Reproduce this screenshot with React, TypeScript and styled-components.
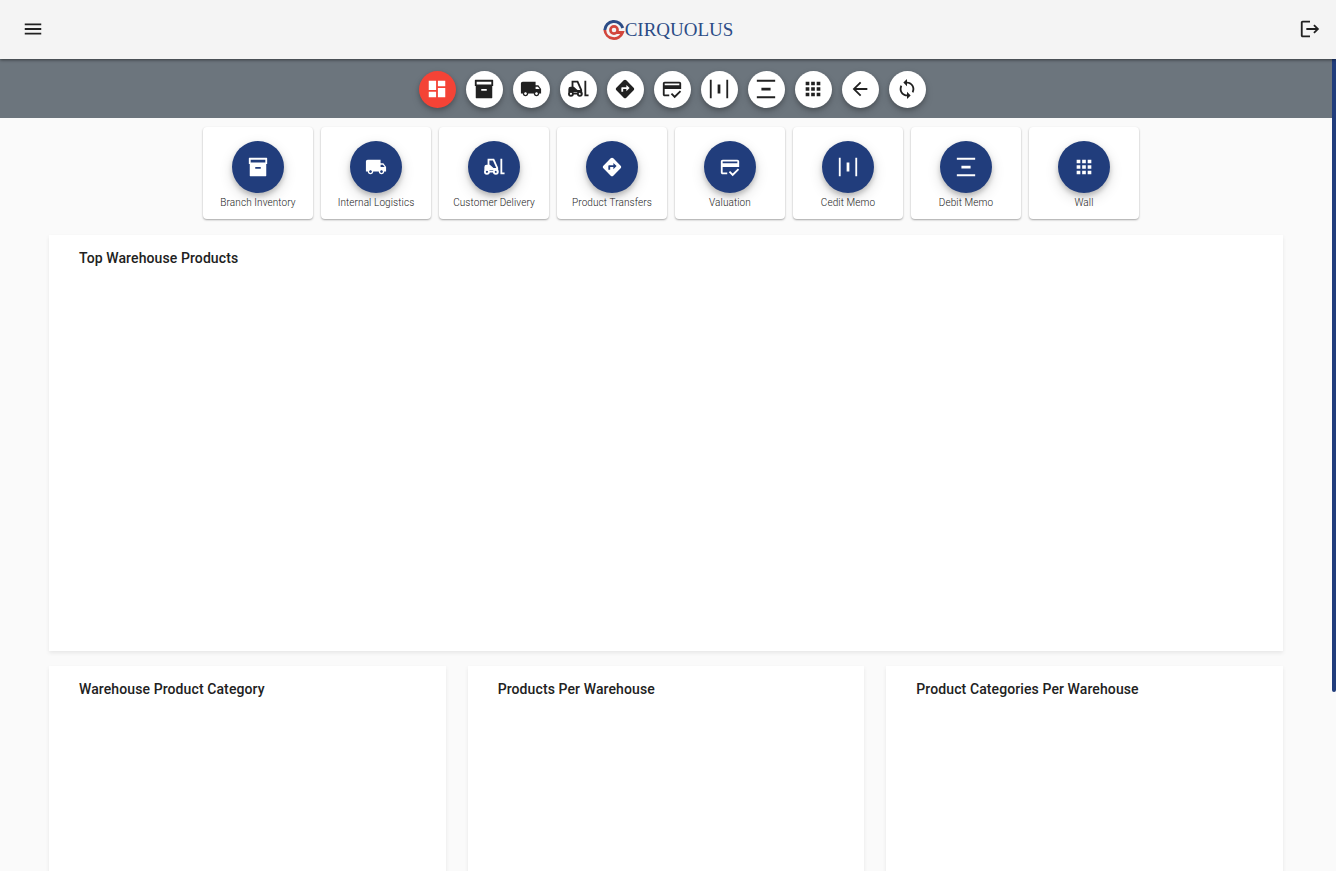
import React, { useLayoutEffect, useRef, useState } from "react";
import styled, { createGlobalStyle, css } from "styled-components";
import {
  MdApps,
  MdArrowBack,
  MdCreditScore,
  MdDashboard,
  MdDirections,
  MdHorizontalDistribute,
  MdLocalShipping,
  MdLogout,
  MdMenu,
  MdSync,
  MdVerticalDistribute,
} from "react-icons/md";

const navy = "#213d7c";

const GlobalStyle = createGlobalStyle`
  *, *::before, *::after { box-sizing: border-box; }
  body {
    margin: 0;
    background: #fafafa;
    color: #212121;
    font-family: Roboto, "Liberation Sans", sans-serif;
  }
`;

const Shell = styled.div`
  display: flex;
  flex-direction: column;
  height: 100vh;
`;

const Header = styled.header`
  position: relative;
  z-index: 1;
  display: grid;
  grid-template-columns: 1fr auto 1fr;
  flex: none;
  align-items: center;
  height: 59px;
  padding: 0 15px 1px;
  background: #f4f4f4;
  box-shadow: 0 1px 3px rgba(0, 0, 0, 0.5);
`;

const IconButton = styled.button<{ $end?: boolean }>`
  display: flex;
  justify-self: ${(p) => (p.$end ? "end" : "start")};
  padding: ${(p) => (p.$end ? "0" : "0 7px")};
  border: 0;
  background: none;
  color: #212121;
  font-size: 22px;
  cursor: pointer;
`;

const Brand = styled.a`
  display: flex;
  align-items: center;
  padding-top: 2px;
  color: #2c4c86;
  font-family: "Liberation Serif", serif;
  font-size: 19px;
  line-height: 24px;
  text-decoration: none;
`;

const Body = styled.div`
  display: flex;
  flex: 1;
  min-height: 0;
`;

const Scroller = styled.main`
  flex: 1;
  min-width: 0;
  overflow-y: auto;
  scrollbar-width: none;
`;

const Rail = styled.div`
  flex: none;
  width: 4px;
`;

const Thumb = styled.div`
  border-radius: 0 0 2px 2px;
  background: ${navy};
`;

const Toolbar = styled.nav`
  display: flex;
  justify-content: center;
  gap: 10px;
  padding: 12px 0 10px 13px;
  background: #6c757d;
`;

const round = css`
  display: flex;
  align-items: center;
  justify-content: center;
  padding: 0;
  border: 0;
  border-radius: 50%;
  font-size: 22px;
  cursor: pointer;
`;

const ToolButton = styled.button<{ $active?: boolean }>`
  ${round}
  width: 37px;
  height: 37px;
  padding: 0 1px 1px 0;
  background: ${(p) => (p.$active ? "#f44336" : "#ffffff")};
  color: ${(p) => (p.$active ? "#ffffff" : "#212121")};
  box-shadow: 0 2px 4px rgba(0, 0, 0, 0.2), 0 4px 8px rgba(0, 0, 0, 0.14);
`;

const Shortcuts = styled.div`
  display: flex;
  justify-content: center;
  gap: 8px;
  padding: 9px 0 16px 10px;
`;

const Shortcut = styled.button`
  display: flex;
  flex-direction: column;
  align-items: center;
  width: 110px;
  padding: 14px 0 6px;
  border: 0;
  border-radius: 4px;
  background: #ffffff;
  box-shadow: 0 1px 2px rgba(0, 0, 0, 0.34);
  color: #212121;
  font-family: inherit;
  font-size: 10px;
  font-weight: 300;
  line-height: 20px;
  letter-spacing: 0.1px;
  cursor: pointer;
`;

const ShortcutIcon = styled.span`
  ${round}
  width: 52px;
  height: 52px;
  background: ${navy};
  color: #ffffff;
  box-shadow: 0 3px 5px rgba(0, 0, 0, 0.2), 0 5px 14px rgba(0, 0, 0, 0.14);
`;

const Panels = styled.div`
  display: grid;
  grid-template-columns: repeat(3, 1fr);
  gap: 15px 22px;
  padding: 0 49px 18px;
`;

const Panel = styled.section<{ $wide?: boolean }>`
  grid-column: ${(p) => (p.$wide ? "1 / -1" : "auto")};
  min-height: 416px;
  padding: 14px 30px;
  background: #ffffff;
  box-shadow: 0 2px 4px rgba(0, 0, 0, 0.08);
`;

const PanelTitle = styled.h2`
  margin: 0;
  font-size: 14px;
  font-weight: 500;
  line-height: 18px;
  letter-spacing: 0.1px;
`;

function Archive() {
  return (
    <svg viewBox="0 0 24 24" width="1em" height="1em" fill="currentColor" aria-hidden="true">
      <path
        fillRule="evenodd"
        d="M2.500 2h19a.5.5 0 0 1 .5.5V8.700h-1V21.500a.5.5 0 0 1-.5.5h-17a.5.5 0 0 1-.5-.5V8.700H2V2.500a.5.5 0 0 1 .5-.5zM4 4v3h16V4zM9 12v2h6v-2z"
      />
    </svg>
  );
}

function Forklift() {
  return (
    <svg
      viewBox="0 0 24 24"
      width="1em"
      height="1em"
      fill="none"
      stroke="currentColor"
      strokeWidth="2"
      aria-hidden="true"
    >
      <path d="M6 10V4h5.500L15.500 13v4M20 3v16h3.500M6 17h6" />
      <path d="M1.500 15.500V12a2.500 2.500 0 0 1 2.500-2.500h3.500l4 3.500h4v2.500z" fill="currentColor" stroke="none" />
      <circle cx="4.300" cy="17.300" r="2.200" />
      <circle cx="14" cy="17.300" r="2.200" />
    </svg>
  );
}

function LogoMark() {
  return (
    <svg viewBox="0 0 22 22" width="22" height="22" fill="none" aria-hidden="true">
      <path d="M1.800 11A9.200 9.200 0 0 1 19.800 9" stroke="#2c4c86" strokeWidth="3" />
      <path d="M1.800 11A9.200 9.200 0 0 0 19.600 13.500H14" stroke="#d2463c" strokeWidth="2.800" />
      <circle cx="11" cy="11" r="3.600" stroke="#d2463c" strokeWidth="2.600" />
    </svg>
  );
}

const sections = [
  { label: "Branch Inventory", icon: <Archive /> },
  { label: "Internal Logistics", icon: <MdLocalShipping /> },
  { label: "Customer Delivery", icon: <Forklift /> },
  { label: "Product Transfers", icon: <MdDirections /> },
  { label: "Valuation", icon: <MdCreditScore /> },
  { label: "Cedit Memo", icon: <MdHorizontalDistribute /> },
  { label: "Debit Memo", icon: <MdVerticalDistribute /> },
  { label: "Wall", icon: <MdApps /> },
];

export default function App() {
  const scroller = useRef<HTMLElement>(null);
  const [thumb, setThumb] = useState({ size: 0, offset: 0 });

  const measure = () => {
    const el = scroller.current;
    if (!el) return;
    const ratio = el.clientHeight / el.scrollHeight;
    setThumb({
      size: ratio < 1 ? Math.round(el.clientHeight * ratio) : 0,
      offset: Math.round(el.scrollTop * ratio),
    });
  };

  useLayoutEffect(() => {
    measure();
    window.addEventListener("resize", measure);
    return () => window.removeEventListener("resize", measure);
  }, []);

  return (
    <Shell>
      <GlobalStyle />
      <Header>
        <IconButton aria-label="Open menu"><MdMenu /></IconButton>
        <Brand href="#">
          <LogoMark />
          CIRQUOLUS
        </Brand>
        <IconButton $end aria-label="Log out"><MdLogout /></IconButton>
      </Header>
      <Body>
        <Scroller ref={scroller} onScroll={measure}>
          <Toolbar aria-label="Warehouse">
            <ToolButton $active aria-label="Dashboard"><MdDashboard /></ToolButton>
            {sections.map((s) => (
              <ToolButton key={s.label} aria-label={s.label}>{s.icon}</ToolButton>
            ))}
            <ToolButton aria-label="Back"><MdArrowBack /></ToolButton>
            <ToolButton aria-label="Refresh"><MdSync /></ToolButton>
          </Toolbar>
          <Shortcuts>
            {sections.map((s) => (
              <Shortcut key={s.label}>
                <ShortcutIcon>{s.icon}</ShortcutIcon>
                {s.label}
              </Shortcut>
            ))}
          </Shortcuts>
          <Panels>
            <Panel $wide><PanelTitle>Top Warehouse Products</PanelTitle></Panel>
            <Panel><PanelTitle>Warehouse Product Category</PanelTitle></Panel>
            <Panel><PanelTitle>Products Per Warehouse</PanelTitle></Panel>
            <Panel><PanelTitle>Product Categories Per Warehouse</PanelTitle></Panel>
          </Panels>
        </Scroller>
        <Rail>
          <Thumb style={{ height: thumb.size, marginTop: thumb.offset }} />
        </Rail>
      </Body>
    </Shell>
  );
}
